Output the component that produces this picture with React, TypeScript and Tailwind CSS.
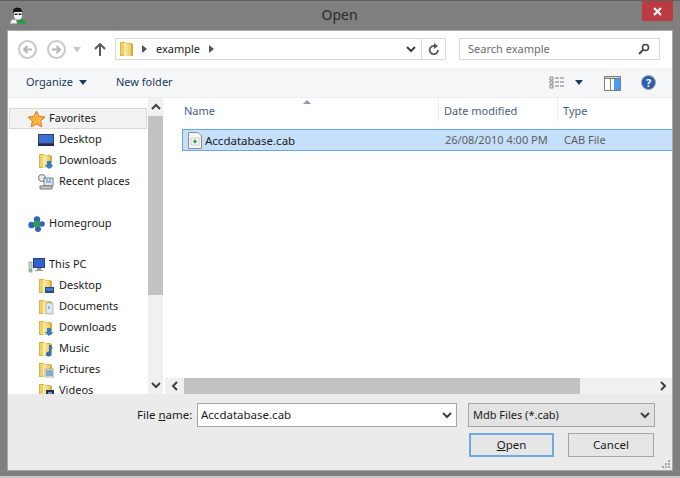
import type { ReactNode } from 'react'

const Folder = ({ children }: { children?: ReactNode }) => (
  <svg width="16" height="16" viewBox="0 0 16 16" className="shrink-0">
    <defs>
      <linearGradient id="folderFront" x1="0" y1="0" x2="1" y2="0">
        <stop offset="0" stopColor="#fdf0b4" />
        <stop offset="1" stopColor="#eec95a" />
      </linearGradient>
    </defs>
    <path d="M1 1h5l1 1h6v13H1z" fill="#dcb345" />
    <path d="M2 2h3v12H2z" fill="#f0cf67" />
    <path d="M5 2l7 1v12H5z" fill="url(#folderFront)" />
    <path d="M12 3h2v12h-2z" fill="#d9ad3c" />
    {children}
  </svg>
)

const ArrowDown = () => <path d="M9 8h4v4h2.500L11 16l-4.500-4H9z" fill="#2b7fd6" />

const Row = ({ icon, label, child }: { icon: ReactNode; label: string; child?: boolean }) => (
  <div className={`flex h-[21px] items-center ${child ? 'gap-[5px] pl-[30px]' : 'gap-1 pl-5'}`}>
    {icon}
    <span className="text-[#1a1a1a]">{label}</span>
  </div>
)

const Chev = ({ d }: { d: string }) => (
  <svg width="10" height="10" viewBox="0 0 10 10">
    <path d={d} fill="none" stroke="#404040" strokeWidth="2" />
  </svg>
)

const NavArrow = ({ d }: { d: string }) => (
  <div className="flex h-[19px] w-[19px] items-center justify-center rounded-full border-2 border-[#c9c9c9]">
    <svg width="11" height="11" viewBox="0 0 11 11">
      <path d={d} fill="none" stroke="#b5b5b5" strokeWidth="2" />
    </svg>
  </div>
)

const Caret = ({ color = '#1f3a63' }: { color?: string }) => (
  <svg width="8" height="5" viewBox="0 0 8 5">
    <path d="M0 0h8L4 5z" fill={color} />
  </svg>
)

const Crumb = () => (
  <svg width="5" height="8" viewBox="0 0 5 8">
    <path d="M0 0l5 4-5 4z" fill="#555" />
  </svg>
)

export default function App() {
  return (
    <div
      className="flex h-[478px] w-[680px] flex-col overflow-hidden border-t border-b-2 border-t-[#5f5f5f] border-b-[#c9c9c9] bg-[#7f7f7f] text-[11px]"
      style={{ fontFamily: '"Noto Sans", sans-serif' }}
    >
      <div className="flex h-[30px] shrink-0">
        <div className="flex w-[27px] items-start justify-end pt-[6px]">
          <svg width="18" height="17" viewBox="0 0 18 17">
            <path d="M4 6l.500-4L8 .5l4 1 1.500 4.500z" fill="#111" />
            <path d="M5 5h8v5l-1.500 2.500h-5L5 10z" fill="#f4f4f4" />
            <path d="M5.500 6.500h3v1.500h-3zM9.500 6.500h3v1.500h-3z" fill="#222" />
            <path d="M1 16.500l2-4 4 .5 1 3.500z" fill="#f2f2f2" />
            <path d="M8 16.500l1-3 4-1.500 3.500 2 1 2.500z" fill="#1f9e3a" />
          </svg>
        </div>
        <div className="flex-1 pl-[10px] pt-[3px] text-center text-[14px] text-[#2b2b2b]">Open</div>
        <div className="mr-[7px] flex h-[20px] w-[31px] items-center justify-center bg-[#bc3a41]">
          <svg width="9" height="9" viewBox="0 0 9 9">
            <path d="M1 1l7 7M8 1l-7 7" stroke="#fff" strokeWidth="2" />
          </svg>
        </div>
      </div>

      <div className="mx-2 flex h-[439px] shrink-0 flex-col bg-white shadow-[0_0_0_1px_#a8a8a8]">
        <div className="flex h-[37px] shrink-0 items-center pb-px pl-[10px] pr-3">
          <NavArrow d="M10 5.500H2M5.500 2L2 5.500 5.500 9" />
          <div className="ml-[10px]">
            <NavArrow d="M1 5.500h8M5.500 2L9 5.500 5.500 9" />
          </div>
          <div className="ml-[7px]">
            <Caret color="#c4c4c4" />
          </div>
          <svg width="12" height="13" viewBox="0 0 12 13" className="ml-[13px]">
            <path d="M6 1v12M1 6l5-5 5 5" fill="none" stroke="#5a5a5a" strokeWidth="2" />
          </svg>
          <div className="ml-[9px] flex h-[22px] w-[331px] items-center border border-[#d9d9d9] pl-[3px]">
            <Folder />
            <div className="ml-[7px]">
              <Crumb />
            </div>
            <span className="ml-[9px] text-[#1a1a1a]">example</span>
            <div className="ml-[9px]">
              <Crumb />
            </div>
            <div className="ml-auto flex h-full items-center">
              <Chev d="M1 3l4 4 4-4" />
              <div className="ml-[5px] flex h-full w-[24px] items-center justify-center border-l border-[#d9d9d9]">
                <svg width="12" height="13" viewBox="0 0 12 13">
                  <path d="M10 7a4.200 4.200 0 1 1-3-4" fill="none" stroke="#555" strokeWidth="1.800" />
                  <path d="M6 0l4 3-4 3z" fill="#555" />
                </svg>
              </div>
            </div>
          </div>
          <div className="ml-[13px] flex h-[22px] w-[201px] items-center justify-between border border-[#d9d9d9] pl-2 pr-[9px]">
            <span className="text-[#6d6d6d]">Search example</span>
            <svg width="12" height="12" viewBox="0 0 12 12">
              <circle cx="7.500" cy="4.500" r="3" fill="none" stroke="#444" strokeWidth="1.600" />
              <path d="M5 7l-4 4" stroke="#444" strokeWidth="2" />
            </svg>
          </div>
        </div>

        <div className="flex h-[30px] shrink-0 items-center border-b border-[#ececec] bg-[#f5f6f7] pl-[18px] text-[#1e395b]">
          <span>Organize</span>
          <div className="ml-[6px]">
            <Caret />
          </div>
          <span className="ml-[29px]">New folder</span>
          <svg width="16" height="14" viewBox="0 0 16 14" className="ml-auto">
            <path d="M1 1h3v3H1zM1 5h3v3H1zM1 9h3v3H1z" fill="#e8eef6" stroke="#8a8a8a" />
            <path d="M6 2h4M11 2h4M6 6h4M11 6h4M6 10h4M11 10h4" stroke="#7b7b7b" />
          </svg>
          <div className="ml-[10px]">
            <Caret />
          </div>
          <svg width="17" height="16" viewBox="0 0 17 16" className="ml-[21px]">
            <path d="M.5 1.500h16v14H.5z" fill="#fff" stroke="#7d7d7d" />
            <path d="M.5 1.500h16v2H.5z" fill="#d5d5d5" stroke="#7d7d7d" />
            <path d="M6.500 3v12" stroke="#7d7d7d" />
            <path d="M10 4h6v11h-6z" fill="#4a9cf0" />
          </svg>
          <svg width="15" height="15" viewBox="0 0 15 15" className="ml-[20px] mr-[16px]">
            <circle cx="7.500" cy="7.500" r="7" fill="#2c5cab" stroke="#9aa5b8" />
            <text x="7.500" y="11.500" textAnchor="middle" fontSize="11" fontWeight="700" fill="#fff">?</text>
          </svg>
        </div>

        <div className="flex min-h-0 flex-1">
          <div className="h-full w-[140px] shrink-0 overflow-hidden pt-[10px]">
            <div className="ml-px flex h-[21px] w-[138px] items-center gap-1 border border-[#d9d9d9] bg-[#f2f2f2] pl-[18px]">
              <svg width="17" height="16" viewBox="0 0 17 16" className="shrink-0">
                <path d="M8.500 0l2.600 5.400 5.900.7-4.400 4 1.200 5.900-5.300-3-5.300 3 1.200-5.900L0 6.100l5.900-.7z" fill="#f9b53d" stroke="#e2772b" />
              </svg>
              <span className="text-[#1a1a1a]">Favorites</span>
            </div>
            <Row
              child
              label="Desktop"
              icon={
                <svg width="16" height="16" viewBox="0 0 16 16" className="shrink-0">
                  <path d="M0 2h16v12H0z" fill="#2a3f7a" />
                  <path d="M1 3h14v8H1z" fill="#3d6fcc" />
                  <path d="M0 12h16v2H0z" fill="#1c2b52" />
                </svg>
              }
            />
            <Row child label="Downloads" icon={<Folder><ArrowDown /></Folder>} />
            <Row
              child
              label="Recent places"
              icon={
                <svg width="16" height="16" viewBox="0 0 16 16" className="shrink-0">
                  <circle cx="4" cy="4" r="3.500" fill="#e8e8e8" stroke="#777" />
                  <path d="M6 4h9v8H6z" fill="#dfe9f5" stroke="#777" />
                  <path d="M8 6h2M11 6h2M8 8h5" stroke="#3a82c9" />
                  <path d="M2 12h12v3H2z" fill="#c9c9c9" stroke="#777" />
                </svg>
              }
            />
            <div className="mt-[21px]">
              <Row
                label="Homegroup"
                icon={
                  <svg width="17" height="16" viewBox="0 0 17 16" className="shrink-0">
                    <circle cx="3.500" cy="9" r="3.200" fill="#2e62c4" />
                    <circle cx="9" cy="3.500" r="3.200" fill="#2e62c4" />
                    <circle cx="14" cy="8" r="2.800" fill="#2e62c4" />
                    <circle cx="10" cy="13" r="3" fill="#2e62c4" />
                    <circle cx="9" cy="8" r="3.500" fill="#2f9e44" />
                  </svg>
                }
              />
            </div>
            <div className="mt-5">
              <Row
                label="This PC"
                icon={
                  <svg width="17" height="16" viewBox="0 0 17 16" className="shrink-0">
                    <path d="M1 5h3v10H1z" fill="#d6d6d6" stroke="#777" strokeWidth=".6" />
                    <path d="M1.500 12h2v2h-2z" fill="#5ab34a" />
                    <path d="M5 1h12v10H5z" fill="#2a3f7a" />
                    <path d="M6 2h10v8H6z" fill="#2f62d0" />
                    <path d="M9 11h4v2h2v1H7v-1h2z" fill="#9a9a9a" />
                  </svg>
                }
              />
            </div>
            <Row
              child
              label="Desktop"
              icon={<Folder><path d="M7 9h9v6H7z" fill="#264a8f" /><path d="M8 10h7v3H8z" fill="#3d7ad0" /></Folder>}
            />
            <Row
              child
              label="Documents"
              icon={<Folder><path d="M8 4h7v11H8z" fill="#dfe7ef" stroke="#999" strokeWidth=".6" /><path d="M10 7h2v3h-2z" fill="#8ab8e8" /></Folder>}
            />
            <Row child label="Downloads" icon={<Folder><ArrowDown /></Folder>} />
            <Row
              child
              label="Music"
              icon={<Folder><path d="M11 4h2l2 4-2-1v6a2.500 2.500 0 1 1-2-2.400z" fill="#2370c8" /></Folder>}
            />
            <Row
              child
              label="Pictures"
              icon={<Folder><path d="M7 7h9v8H7z" fill="#f4f4f4" stroke="#888" strokeWidth=".6" /><path d="M8 8h7v6H8z" fill="#7fb0c9" /></Folder>}
            />
            <Row
              child
              label="Videos"
              icon={<Folder><path d="M8 7h8v8H8z" fill="#26364f" /><path d="M10 9h4v4h-4z" fill="#6a93c4" /></Folder>}
            />
          </div>

          <div className="flex w-[15px] shrink-0 flex-col bg-[#f0f0f0]">
            <div className="flex h-[18px] items-center justify-center">
              <Chev d="M1 7l4-4 4 4" />
            </div>
            <div className="h-[179px] bg-[#c2c2c2]" />
            <div className="mt-auto flex h-[18px] items-center justify-center">
              <Chev d="M1 3l4 4 4-4" />
            </div>
          </div>

          <div className="ml-[2px] flex min-w-0 flex-1 flex-col">
            <div className="relative flex h-[27px] shrink-0 items-center text-[#4c607a]">
              <span className="ml-[19px] w-[260px]">Name</span>
              <span className="w-[119px]">Date modified</span>
              <span>Type</span>
              <svg width="8" height="4" viewBox="0 0 8 4" className="absolute left-[138px] top-[2px]">
                <path d="M0 4l4-4 4 4z" fill="#7b9ebd" />
              </svg>
              <div className="absolute left-[273px] top-0 h-[24px] w-px bg-[#ececf0]" />
              <div className="absolute left-[392px] top-0 h-[24px] w-px bg-[#ececf0]" />
            </div>
            <div className="ml-[17px] mt-[4px] flex h-[22px] items-center border border-r-0 border-[#66a7e8] bg-[#c4e0fb] pt-px">
              <svg width="16" height="17" viewBox="0 0 16 17" className="ml-[4px] shrink-0">
                <path d="M1.500.5H11l3.500 3.500v12.500h-13z" fill="#f7f7f7" stroke="#8a8a8a" />
                <path d="M4 6h8v7H4z" fill="#fff" stroke="#c8c8c8" />
                <path d="M8 7.500v4M6 9.500h4" stroke="#27a044" strokeWidth="1.500" />
              </svg>
              <span className="ml-[2px] w-[240px] text-[11.5px] text-[#1a1a1a]">Accdatabase.cab</span>
              <span className="w-[119px] text-[#5f5f5f]">26/08/2010 4:00 PM</span>
              <span className="text-[#5f5f5f]">CAB File</span>
            </div>
            <div className="flex-1" />
            <div className="flex h-[16px] shrink-0 items-center bg-[#f0f0f0]">
              <div className="flex w-[19px] justify-center">
                <Chev d="M7 1L3 5l4 4" />
              </div>
              <div className="h-full w-[396px] bg-[#c2c2c2]" />
              <div className="ml-auto mr-[3px] flex w-[13px] justify-center">
                <Chev d="M3 1l4 4-4 4" />
              </div>
            </div>
          </div>
        </div>

        <div className="relative flex h-[76px] shrink-0 flex-col bg-[#ebebeb]">
          <div className="mt-[9px] flex items-center">
            <span className="ml-[129px] w-[60px] text-[11.5px] text-[#1a1a1a]">
              File <span className="underline">n</span>ame:
            </span>
            <div className="flex h-[24px] w-[260px] items-center justify-between border border-[#a5a5a5] bg-white pl-[3px] pr-[4px] text-[11.5px] text-[#1a1a1a]">
              <span>Accdatabase.cab</span>
              <Chev d="M1 3l4 4 4-4" />
            </div>
            <div className="ml-[11px] flex h-[24px] w-[187px] items-center justify-between border border-[#a5a5a5] bg-[#e3e3e3] pl-[4px] pr-[4px] text-[#1a1a1a]">
              <span>Mdb Files (*.cab)</span>
              <Chev d="M1 3l4 4 4-4" />
            </div>
          </div>
          <div className="mt-[6px] flex">
            <div className="ml-[461px] flex h-[24px] w-[85px] items-center justify-center border-2 border-[#6fa8e6] bg-[#e6e6e6] text-[11.5px] text-[#1a1a1a]">
              <span><span className="underline">O</span>pen</span>
            </div>
            <div className="ml-[14px] flex h-[24px] w-[86px] items-center justify-center border border-[#a5a5a5] bg-[#e6e6e6] text-[11.5px] text-[#1a1a1a]">
              Cancel
            </div>
          </div>
          <svg width="9" height="9" viewBox="0 0 9 9" className="absolute bottom-px right-px">
            <path d="M6 0h2v2H6zM3 3h2v2H3zM6 3h2v2H6zM0 6h2v2H0zM3 6h2v2H3zM6 6h2v2H6z" fill="#a8a8a8" />
          </svg>
        </div>
      </div>
    </div>
  )
}
